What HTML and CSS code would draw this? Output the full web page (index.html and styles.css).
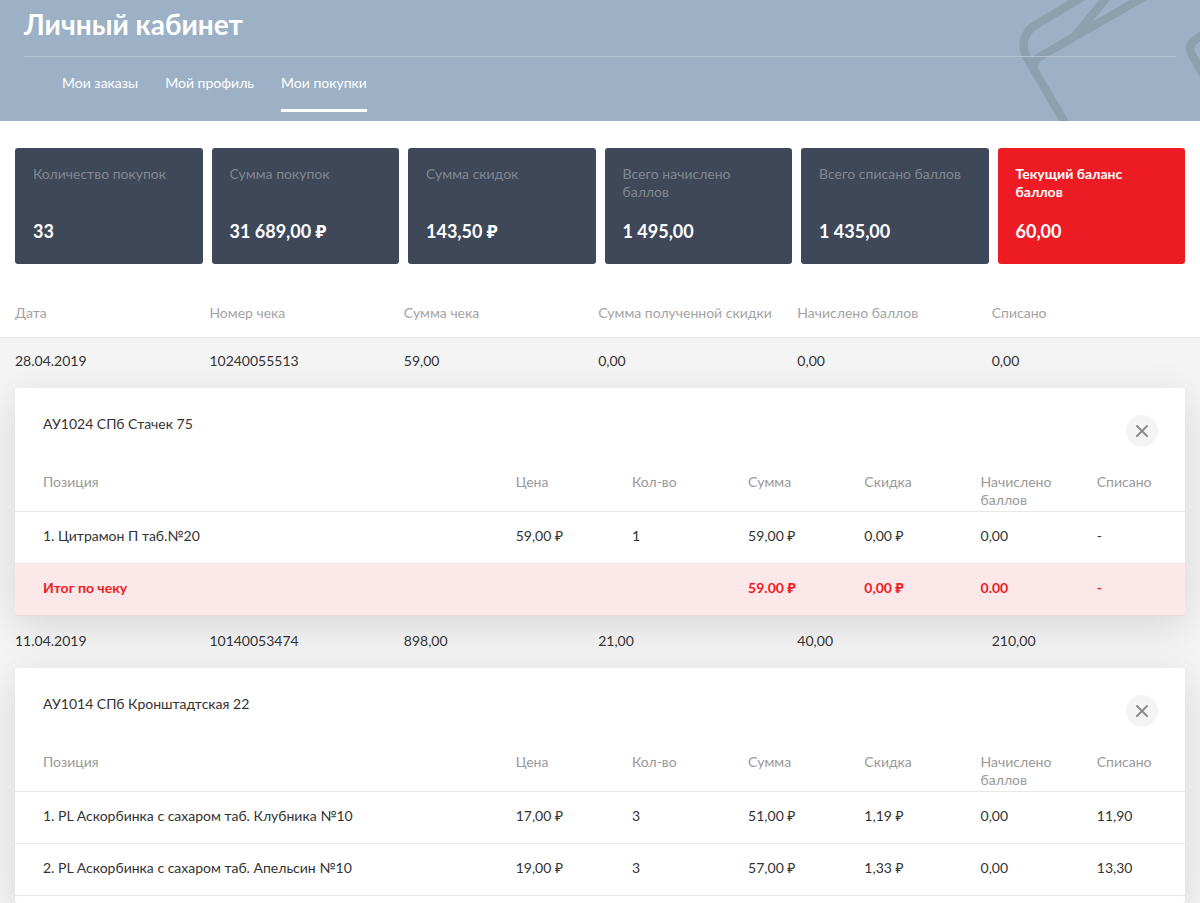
FILE: index.html
```html
<!DOCTYPE html>
<html lang="ru">
<head>
<meta charset="utf-8">
<meta name="viewport" content="width=device-width, initial-scale=1">
<title>Личный кабинет</title>
<link rel="stylesheet" href="styles.css">
</head>
<body>
<header class="top">
  <svg class="top-art" viewBox="0 0 660 363" aria-hidden="true">
    <g fill="none" stroke="#8da0b0" stroke-width="25">
      <path d="M312-12 168 74C130 97 122 138 140 172L262 380"/>
      <path d="M499-14 185 167Q155 184 165 205"/>
      <path d="M384-12 285 108"/>
      <path d="M680 98 650 116C630 128 625 145 635 163L675 232"/>
    </g>
  </svg>
  <h1 class="top-title">Личный кабинет</h1>
  <nav class="tabs">
    <a class="tab" href="#orders">Мои заказы</a>
    <a class="tab" href="#profile">Мой профиль</a>
    <a class="tab tab-active" href="#purchases" aria-current="page">Мои покупки</a>
  </nav>
</header>
<main>
  <dl class="stats">
    <div class="stat"><dt>Количество покупок</dt><dd>33</dd></div>
    <div class="stat"><dt>Сумма покупок</dt><dd>31 689,00 ₽</dd></div>
    <div class="stat"><dt>Сумма скидок</dt><dd>143,50 ₽</dd></div>
    <div class="stat"><dt>Всего начислено баллов</dt><dd>1 495,00</dd></div>
    <div class="stat"><dt>Всего списано баллов</dt><dd>1 435,00</dd></div>
    <div class="stat stat-balance"><dt>Текущий баланс баллов</dt><dd>60,00</dd></div>
  </dl>
  <table class="receipts">
    <colgroup><col class="c-std"><col class="c-std"><col class="c-std"><col class="c-wide"><col class="c-std"><col></colgroup>
    <thead>
      <tr><th>Дата</th><th>Номер чека</th><th>Сумма чека</th><th>Сумма полученной скидки</th><th>Начислено баллов</th><th>Списано</th></tr>
    </thead>
    <tbody>
      <tr class="receipt receipt-first"><td>28.04.2019</td><td>10240055513</td><td>59,00</td><td>0,00</td><td>0,00</td><td>0,00</td></tr>
      <tr>
        <td class="detail" colspan="6">
          <section class="card">
            <div class="card-head">
              <h2>АУ1024 СПб Стачек 75</h2>
              <button class="close" type="button" aria-label="Закрыть"><svg viewBox="0 0 12 12"><path d="M1 1 11 11M11 1 1 11"/></svg></button>
            </div>
            <table class="items">
              <colgroup><col class="c-name"><col><col><col><col><col><col></colgroup>
              <thead>
                <tr><th>Позиция</th><th>Цена</th><th>Кол-во</th><th>Сумма</th><th>Скидка</th><th>Начислено баллов</th><th>Списано</th></tr>
              </thead>
              <tbody>
                <tr><td>1. Цитрамон П таб.№20</td><td>59,00 ₽</td><td>1</td><td>59,00 ₽</td><td>0,00 ₽</td><td>0,00</td><td>-</td></tr>
              </tbody>
              <tfoot>
                <tr><td colspan="3">Итог по чеку</td><td>59.00 ₽</td><td>0,00 ₽</td><td>0.00</td><td>-</td></tr>
              </tfoot>
            </table>
          </section>
        </td>
      </tr>
      <tr class="receipt"><td>11.04.2019</td><td>10140053474</td><td>898,00</td><td>21,00</td><td>40,00</td><td>210,00</td></tr>
      <tr>
        <td class="detail" colspan="6">
          <section class="card card-last">
            <div class="card-head">
              <h2>АУ1014 СПб Кронштадтская 22</h2>
              <button class="close" type="button" aria-label="Закрыть"><svg viewBox="0 0 12 12"><path d="M1 1 11 11M11 1 1 11"/></svg></button>
            </div>
            <table class="items">
              <colgroup><col class="c-name"><col><col><col><col><col><col></colgroup>
              <thead>
                <tr><th>Позиция</th><th>Цена</th><th>Кол-во</th><th>Сумма</th><th>Скидка</th><th>Начислено баллов</th><th>Списано</th></tr>
              </thead>
              <tbody>
                <tr><td>1. PL Аскорбинка с сахаром таб. Клубника №10</td><td>17,00 ₽</td><td>3</td><td>51,00 ₽</td><td>1,19 ₽</td><td>0,00</td><td>11,90</td></tr>
                <tr><td>2. PL Аскорбинка с сахаром таб. Апельсин №10</td><td>19,00 ₽</td><td>3</td><td>57,00 ₽</td><td>1,33 ₽</td><td>0,00</td><td>13,30</td></tr>
              </tbody>
            </table>
          </section>
        </td>
      </tr>
    </tbody>
  </table>
</main>
</body>
</html>
```
FILE: styles.css
```css
* {
  box-sizing: border-box;
}

body {
  margin: 0;
  background: #fff;
  color: #333;
  font: 14px/18px Lato, "Noto Sans", sans-serif;
}

h1, h2, dl, dd {
  margin: 0;
}

.top {
  position: relative;
  overflow: hidden;
  padding: 6px 24px 9px;
  background: #9cb1c5;
  color: #fff;
}

.top-art {
  position: absolute;
  top: 0;
  right: 0;
  width: 220px;
  height: 121px;
}

.top-title {
  position: relative;
  padding-bottom: 14px;
  border-bottom: 1px solid #b4c4d3;
  font-size: 28px;
  line-height: 36px;
  font-weight: 700;
}

.tabs {
  position: relative;
  display: flex;
  gap: 27px;
  padding: 17px 38px 0;
}

.tab {
  padding-bottom: 17px;
  border-bottom: 3px solid transparent;
  color: #fff;
  text-decoration: none;
}

.tab-active {
  border-bottom-color: #fff;
}

.stats {
  display: grid;
  grid-template-columns: repeat(6, 1fr);
  gap: 9px;
  padding: 27px 15px 24px;
}

.stat {
  display: flex;
  flex-direction: column;
  justify-content: space-between;
  min-height: 116px;
  padding: 17px 18px 21px;
  border-radius: 3px;
  background: #3f4859;
  color: #fff;
}

.stat dt {
  color: #808793;
}

.stat dd {
  font-size: 18px;
  line-height: 24px;
  font-weight: 700;
}

.stat-balance {
  background: #ed1c24;
}

.stat-balance dt {
  color: #fff;
  font-weight: 700;
}

table {
  width: 100%;
  border-collapse: separate;
  border-spacing: 0;
  table-layout: fixed;
}

th {
  font-weight: 400;
  text-align: left;
  vertical-align: top;
}

td {
  padding: 0;
}

.c-std {
  width: 16.2%;
}

.c-wide {
  width: 16.6%;
}

.c-name {
  width: 40.4%;
}

.receipts {
  background: #f4f4f4;
}

.receipts > thead th {
  padding: 16px 0 15px 15px;
  border-bottom: 1px solid #e5e5e5;
  background: #fff;
  color: #a3a3a3;
  white-space: nowrap;
}

.receipt td {
  position: relative;
  z-index: 1;
  padding: 16px 0 18px 15px;
}

.receipt-first td {
  padding-top: 14px;
}

.receipts .detail {
  padding: 0 15px;
}

.card {
  border-radius: 3px;
  background: #fff;
  box-shadow: 0 10px 40px rgba(0, 0, 0, 0.12);
}

.card-last {
  padding-bottom: 7px;
}

.card-head {
  display: flex;
  justify-content: space-between;
  align-items: flex-start;
  padding: 27px 27px 26px 28px;
}

.card-head h2 {
  font-size: 14px;
  line-height: 18px;
  font-weight: 400;
}

.close {
  display: grid;
  place-items: center;
  width: 32px;
  height: 32px;
  padding: 0;
  border: 0;
  border-radius: 50%;
  background: #f4f4f4;
  cursor: pointer;
}

.close svg {
  width: 12px;
  height: 12px;
  fill: none;
  stroke: #8c8c8c;
  stroke-width: 2;
  stroke-linecap: round;
}

.items th {
  padding: 0 0 2px 28px;
  border-bottom: 1px solid #e8e8e8;
  color: #999;
}

.items td {
  padding: 15px 0 18px 28px;
  border-bottom: 1px solid #e8e8e8;
}

.items tfoot td {
  border-bottom-color: #eadcdc;
  background: #fce8e8;
  color: #ed1c24;
  font-weight: 700;
}
```
